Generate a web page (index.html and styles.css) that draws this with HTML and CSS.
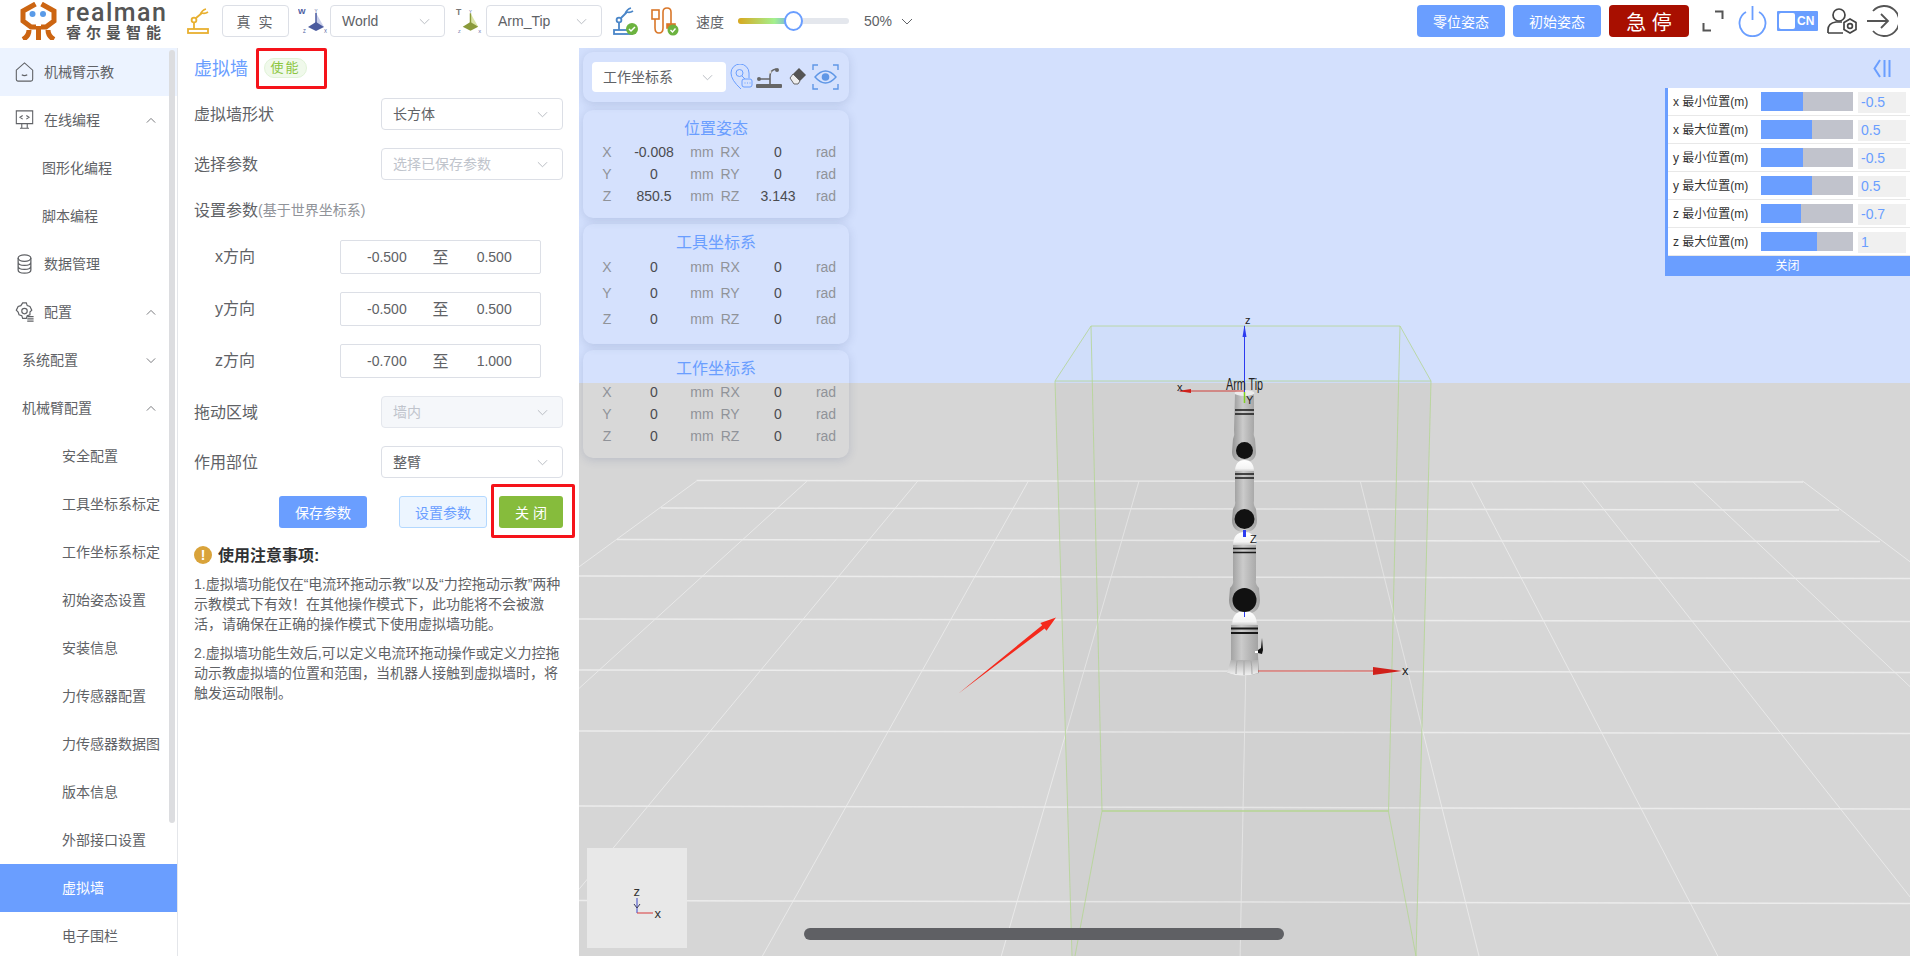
FILE: index.html
```html
<!DOCTYPE html>
<html lang="zh-CN">
<head>
<meta charset="utf-8">
<title>realman 虚拟墙</title>
<link rel="stylesheet" href="styles.css">
</head>
<body>
<div class="app">
  <header class="topbar">
    <div class="logo">
      <svg class="logo-mark" viewBox="0 0 37 38"><g fill="none" stroke="#cc6512" stroke-width="5"><path d="M15.500 2 3 9v10l8 6h5"/><path d="M21.500 2 34 9v10l-8 6h-5"/><path d="M18.500 24v14"/><path d="M9 28q0 6-6 9.500"/><path d="M28 28q0 6 6 9.500"/></g><circle cx="12.500" cy="12" r="3" fill="#5a9be8"/><circle cx="23" cy="12" r="3" fill="#5a9be8"/></svg>
      <div class="logo-text"><div class="logo-en">realman</div><div class="logo-cn">睿尔曼智能</div></div>
    </div>
    <svg class="i-arm" viewBox="0 0 22 26"><g fill="none" stroke="#e8b030" stroke-width="1.800"><rect x="1" y="21" width="20" height="4"/><path d="M7 21v-7"/><circle cx="7" cy="12" r="2.400"/><path d="M9 10l6-5M13 7q2-5 6-6M15 5q3 1 6-1"/></g></svg>
    <div class="btn-mode">真 实</div>
    <svg class="i-axis" viewBox="0 0 30 28"><path d="M18 6l8 14h-8z" fill="#c9cfea"/><path d="M18 6v12" stroke="#4a5a9e" stroke-width="1.500"/><path d="M10 20l8-5 8 5-8 4z" fill="#4a5a9e"/><text class="axis-l axis-w" x="0" y="7">W</text><text class="axis-s" x="16.500" y="6">Y</text><text class="axis-s" x="5" y="26">Z</text><text class="axis-s" x="26" y="26">X</text></svg>
    <div class="select sel-top"><span>World</span><svg class="chev" viewBox="0 0 12 7"><path d="M1 1l5 5 5-5"/></svg></div>
    <svg class="i-axis i-axis-t" viewBox="0 0 30 28"><path d="M16 6l8 14h-8z" fill="#dbe5a8"/><path d="M16 6v12" stroke="#8a9a3a" stroke-width="1.500"/><path d="M8 20l8-5 8 5-8 4z" fill="#8a9a3a"/><text class="axis-l axis-tt" x="1" y="8">T</text><text class="axis-s" x="14.500" y="6">Y</text><text class="axis-s" x="3" y="26">Z</text><text class="axis-s" x="24" y="26">X</text></svg>
    <div class="select sel-top sel-tip"><span>Arm_Tip</span><svg class="chev" viewBox="0 0 12 7"><path d="M1 1l5 5 5-5"/></svg></div>
    <svg class="i-stat" viewBox="0 0 26 30"><g fill="none" stroke="#4a86c8" stroke-width="1.800"><rect x="1" y="24" width="18" height="4"/><path d="M6 24v-8"/><circle cx="6" cy="14" r="2.400"/><path d="M8 12l6-6M12 8q2-5 6-6M14 6q3 1 6-1"/></g><circle cx="19" cy="23" r="6" fill="#6cb33f"/><path d="M16 23l2 2 4-4" fill="none" stroke="#fff" stroke-width="1.500"/></svg>
    <svg class="i-cable" viewBox="0 0 29 30"><g fill="none" stroke="#d9772a" stroke-width="1.600"><rect x="1" y="4" width="7" height="9"/><path d="M4 13v9q0 5 4 5t4-5V6q0-4 4-4t4 4v12"/><rect x="16" y="18" width="8" height="4" fill="#d9772a"/></g><circle cx="22" cy="24" r="5.500" fill="#6cb33f"/><path d="M19.500 24l2 2 3-3.500" fill="none" stroke="#fff" stroke-width="1.400"/></svg>
    <span class="speed-label">速度</span>
    <div class="slider"><div class="slider-fill"></div><div class="slider-knob"></div></div>
    <span class="speed-val">50%</span>
    <svg class="chev chev-speed" viewBox="0 0 12 7"><path d="M1 1l5 5 5-5"/></svg>
    <div class="spacer"></div>
    <div class="btn-blue">零位姿态</div>
    <div class="btn-blue btn-next">初始姿态</div>
    <div class="btn-stop">急 停</div>
    <svg class="i-full" viewBox="0 0 22 22"><path d="M13 1.500h7.500V9M1.500 13v7.500H9" fill="none" stroke="#555" stroke-width="2"/></svg>
    <svg class="i-power" viewBox="0 0 29 32"><path d="M8 7a13 13 0 1 0 13 0M14.500 1v14" fill="none" stroke="#6a9eff" stroke-width="1.800"/></svg>
    <div class="lang"><div class="lang-box"></div><span>CN</span></div>
    <svg class="i-user" viewBox="0 0 30 28"><g fill="none" stroke="#444" stroke-width="1.700"><circle cx="12" cy="8" r="6"/><path d="M1 26v-3q0-7 8-8h6M1 26h15"/><path d="M23 12l6 3.500v7L23 26l-6-3.500v-7z"/><circle cx="23" cy="19" r="2.400"/></g></svg>
    <svg class="i-exit" viewBox="0 0 32 32"><path d="M7 6a15 15 0 1 1 0 20M1 16h21M15 9l7 7-7 7" fill="none" stroke="#555" stroke-width="1.800"/></svg>
  </header>

  <div class="body">
    <nav class="side">
      <div class="nav-bar"></div>
      <div class="nav on-hover"><svg class="nav-ic" viewBox="0 0 20 22"><path d="M1 9l9-8 9 8v10q0 2-2 2H3q-2 0-2-2zM7 14q3 2 6 0" fill="none" stroke="#606266" stroke-width="1.200"/></svg><span>机械臂示教</span></div>
      <div class="nav"><svg class="nav-ic" viewBox="0 0 20 22"><path d="M1 1h18v14H1zM7 15v5M13 15v5M5 20h10M8 6L5 8l3 2M12 6l3 2-3 2" fill="none" stroke="#606266" stroke-width="1.200"/></svg><span>在线编程</span><svg class="chev nav-chev" viewBox="0 0 12 7"><path d="M1 6l5-5 5 5"/></svg></div>
      <div class="nav lv2"><span>图形化编程</span></div>
      <div class="nav lv2"><span>脚本编程</span></div>
      <div class="nav"><svg class="nav-ic" viewBox="0 0 20 22"><g fill="none" stroke="#606266" stroke-width="1.400"><ellipse cx="10" cy="4.500" rx="7" ry="3.500"/><path d="M3 4.500v13q0 3.500 7 3.500t7-3.500v-13M3 9q0 3.500 7 3.500T17 9M3 13.500q0 3.500 7 3.500t7-3.500"/></g></svg><span>数据管理</span></div>
      <div class="nav"><svg class="nav-ic" viewBox="0 0 20 22"><g fill="none" stroke="#606266" stroke-width="1.300"><path d="M8 1h4l1 3 3 1 2 4-2 2 0 3-3 1-1 3H8l-1-3-3-1-1-3-2-2 2-4 3-1z"/><circle cx="10" cy="10" r="3"/><path d="M13 16h7M13 18.500h7M13 21h7"/></g></svg><span>配置</span><svg class="chev nav-chev" viewBox="0 0 12 7"><path d="M1 6l5-5 5 5"/></svg></div>
      <div class="nav lv1"><span>系统配置</span><svg class="chev nav-chev" viewBox="0 0 12 7"><path d="M1 1l5 5 5-5"/></svg></div>
      <div class="nav lv1"><span>机械臂配置</span><svg class="chev nav-chev" viewBox="0 0 12 7"><path d="M1 6l5-5 5 5"/></svg></div>
      <div class="nav lv3"><span>安全配置</span></div>
      <div class="nav lv3"><span>工具坐标系标定</span></div>
      <div class="nav lv3"><span>工作坐标系标定</span></div>
      <div class="nav lv3"><span>初始姿态设置</span></div>
      <div class="nav lv3"><span>安装信息</span></div>
      <div class="nav lv3"><span>力传感器配置</span></div>
      <div class="nav lv3"><span>力传感器数据图</span></div>
      <div class="nav lv3"><span>版本信息</span></div>
      <div class="nav lv3"><span>外部接口设置</span></div>
      <div class="nav lv3 active"><span>虚拟墙</span></div>
      <div class="nav lv3"><span>电子围栏</span></div>
    </nav>

    <section class="panel">
      <div class="p-title"><span class="p-h">虚拟墙</span><span class="tag">使能</span></div>
      <div class="p-row first"><label>虚拟墙形状</label><div class="select sel-p"><span>长方体</span><svg class="chev" viewBox="0 0 12 7"><path d="M1 1l5 5 5-5"/></svg></div></div>
      <div class="p-row"><label>选择参数</label><div class="select sel-p ph"><span>选择已保存参数</span><svg class="chev" viewBox="0 0 12 7"><path d="M1 1l5 5 5-5"/></svg></div></div>
      <div class="p-sub">设置参数<small>(基于世界坐标系)</small></div>
      <div class="r-row r-first"><label>x方向</label><div class="range"><span>-0.500</span><span class="to">至</span><span>0.500</span></div></div>
      <div class="r-row"><label>y方向</label><div class="range"><span>-0.500</span><span class="to">至</span><span>0.500</span></div></div>
      <div class="r-row"><label>z方向</label><div class="range"><span>-0.700</span><span class="to">至</span><span>1.000</span></div></div>
      <div class="p-row"><label>拖动区域</label><div class="select sel-p ph dis"><span>墙内</span><svg class="chev" viewBox="0 0 12 7"><path d="M1 1l5 5 5-5"/></svg></div></div>
      <div class="p-row"><label>作用部位</label><div class="select sel-p"><span>整臂</span><svg class="chev" viewBox="0 0 12 7"><path d="M1 1l5 5 5-5"/></svg></div></div>
      <div class="p-btns"><div class="pb pb-save">保存参数</div><div class="pb pb-set">设置参数</div><div class="pb pb-close">关 闭</div></div>
      <div class="note-h"><span class="note-ic">!</span><b>使用注意事项:</b></div>
      <p class="note n1">1.虚拟墙功能仅在“电流环拖动示教”以及“力控拖动示教”两种示教模式下有效！在其他操作模式下，此功能将不会被激活，请确保在正确的操作模式下使用虚拟墙功能。</p>
      <p class="note n2">2.虚拟墙功能生效后,可以定义电流环拖动操作或定义力控拖动示教虚拟墙的位置和范围，当机器人接触到虚拟墙时，将触发运动限制。</p>
    </section>

    <main class="scene">
      <svg class="canvas" viewBox="579 48 1331 908">
        <defs>
          <linearGradient id="link" x1="0" x2="1" y1="0" y2="0"><stop offset="0" stop-color="#949494"/><stop offset=".45" stop-color="#cbcbcb"/><stop offset="1" stop-color="#a0a0a0"/></linearGradient>
          <linearGradient id="wh" x1="0" x2="0" y1="0" y2="1"><stop offset="0" stop-color="#fff"/><stop offset=".7" stop-color="#f4f4f4"/><stop offset="1" stop-color="#c4c4c4"/></linearGradient>
          <linearGradient id="flare" x1="0" x2="0" y1="0" y2="1"><stop offset="0" stop-color="#b0b0b0"/><stop offset="1" stop-color="#f2f2f2"/></linearGradient>
        </defs>
        <rect x="579" y="383" width="1331" height="573" fill="#d6d6d6"/>
        <g class="grid-v">
          <path d="M696.600 481 45.900 956M807.200 481 284.700 956M917.800 481 523.600 956M1028.400 481 762.400 956M1139 481 1001.300 956M1249.600 481 1240.100 956M1360.200 481 1479 956M1470.800 481 1717.800 956M1581.400 481 1956.700 956M1692 481 2195.500 956M1802.600 481 2434.400 956"/>
        </g>
        <g class="grid-h">
          <path d="M696.600 480.500 1803 482M661 508 1839 510M617 539.500 1880 541.500M579 576 1910 578.500M579 619 1910 621.500M579 670 1910 672.500M579 731 1910 733.500M579 806 1910 809M579 900.500 1910 903.500"/>
        </g>
        <polygon points="1091,326 1400,326 1431,381 1055,381" fill="#c8d8f5" fill-opacity=".25"/>
        <polygon points="1055,381 1431,381 1416,956 1072,956" fill="#9a9a9a" fill-opacity=".07"/>
        <g class="wall">
          <path d="M1091 326H1400L1431 381H1055zM1055 381 1072 956M1431 381 1416 956M1091 326 1102 811 1075 956M1400 326 1388.500 812 1416 956"/>
          <path class="wall-b" d="M1102 811H1388.500"/>
        </g>
        <g class="robot">
          <path d="M1235 394q9.500-4 19 0v36q-1 5 1 9l1 13q0 10-12 10t-12-10l1-13q2-4 1-9z" fill="url(#link)"/>
          <ellipse cx="1244.500" cy="393" rx="10" ry="3" fill="#ececec"/>
          <path d="M1235 410h19M1235 414h19" stroke="#181818" stroke-width="1.500"/>
          <path d="M1235 472q0-12 9.500-12t9.500 12z" fill="url(#wh)"/>
          <path d="M1235 471h19v30q-1 4 2 8l1 11q0 12-12.500 12t-12.500-12l1-11q3-4 2-8z" fill="url(#link)"/>
          <path d="M1235 474h19M1235 478h19" stroke="#181818" stroke-width="1.500"/>
          <circle cx="1244.500" cy="450.500" r="8.500" fill="#111"/>
          <path d="M1233 546q0-14 11.500-14t11.500 14z" fill="url(#wh)"/>
          <path d="M1233 545h23v35q-1 4 3 8l1 12q0 14-15.500 14t-15.500-14l1-12q4-4 3-8z" fill="url(#link)"/>
          <path d="M1233 548.500h23M1233 552.500h23" stroke="#181818" stroke-width="1.500"/>
          <circle cx="1244.500" cy="519" r="10" fill="#111"/>
          <path d="M1232 626q0-15 12.500-15t12.500 15z" fill="url(#wh)"/>
          <path d="M1231 625h27v31l1 17q-15 5-32 0 4-6 4-14z" fill="url(#link)"/>
          <path d="M1227 673q2-8 4-13h27v13q-15 5-31 0z" fill="url(#flare)"/>
          <path d="M1236 674q0-8 1-13M1244 675v-14M1252 674q0-8-1-13" stroke="#a8a8a8" stroke-width="1" fill="none"/>
          <path d="M1231 628.500h27M1231 633h27" stroke="#181818" stroke-width="1.800"/>
          <circle cx="1244.500" cy="600" r="12" fill="#111"/>
          <path d="M1258 650l3-2 1-10 1 12-1 4-4-1z" fill="#111"/>
          <path d="M1258 652h-3" stroke="#fff" stroke-width="2"/>
        </g>
        <g class="axes">
          <path class="ax-blue" d="M1244.500 392V326"/><polygon points="1244.500,325 1242.500,337 1246.500,337" fill="#2b3bf0"/>
          <path class="ax-red" d="M1244 391H1180"/><polygon points="1178,391 1191,389 1191,393" fill="#d0201a"/>
          <path d="M1244.500 392v11" stroke="#7fd020" stroke-width="1.500"/>
          <path d="M1244.500 530v7" stroke="#2b3bf0" stroke-width="3"/>
          <path d="M1244.500 612v5" stroke="#2b3bf0"/>
          <path class="ax-red" d="M1258 671H1375"/><polygon points="1373,667 1402,671 1373,675" fill="#d0201a"/>
          <text class="lbl" x="1245" y="324">z</text>
          <text class="lbl" x="1177" y="391">x</text>
          <text class="lbl" x="1246" y="404">Y</text>
          <text class="lbl" x="1250" y="543">Z</text>
          <text class="lbl lbl-x" x="1402" y="675">x</text>
          <text class="lbl-tip" x="1226" y="390" textLength="37" lengthAdjust="spacingAndGlyphs">Arm Tip</text>
        </g>
        <polygon points="958.500,693.500 1042.200,625.200 1040.300,622.900 1056,617.500 1046.500,630.700 1044.600,628.400" fill="#f4291c"/>
      </svg>

      <div class="float-col">
        <div class="f-card f-tool">
          <div class="select sel-coord"><span>工作坐标系</span><svg class="chev" viewBox="0 0 12 7"><path d="M1 1l5 5 5-5"/></svg></div>
          <svg class="i-loc" viewBox="0 0 23 27"><g fill="none" stroke="#6a9eff" stroke-width="1"><path d="M11 25Q1 16 1 9a9 9 0 0 1 18 0v5"/><circle cx="9.500" cy="9" r="3.500"/><path d="M12 12l3 3"/><rect x="12" y="15" width="10" height="8" rx="2"/></g><path d="M14.500 19h1M17 19h1M19.500 19h1" stroke="#6a9eff"/></svg>
          <svg class="i-rob" viewBox="0 0 26 21"><rect x="0" y="17" width="26" height="4" rx="1" fill="#666"/><g fill="none" stroke="#666" stroke-width="1.600"><path d="M14 17V9q0-6 6-7M3 12h11"/></g><circle cx="3" cy="12" r="2" fill="#666"/><circle cx="21" cy="3" r="2" fill="#666"/><circle cx="14" cy="5" r="1.500" fill="#ddd"/></svg>
          <svg class="i-era" viewBox="0 0 17 18"><path d="M10 0l7 7-6 6-7-7z" fill="#555"/><path d="M4 6l7 7-2 3H5L1 10z" fill="#eee" stroke="#666"/></svg>
          <svg class="i-eye" viewBox="0 0 27 26"><g fill="none" stroke="#5f97e6" stroke-width="1.400"><path d="M1 6V1h5M21 1h5v5M26 20v5h-5M6 25H1v-5M3 13q10.500-12 21 0-10.500 12-21 0z"/></g><circle cx="13.500" cy="13" r="3.800" fill="#5f97e6"/></svg>
        </div>
        <div class="f-card f-data d1">
          <div class="f-title">位置姿态</div>
          <div class="f-grid">
            <span class="l">X</span><span class="v">-0.008</span><span class="u">mm</span><span class="l">RX</span><span class="v">0</span><span class="u">rad</span>
            <span class="l">Y</span><span class="v">0</span><span class="u">mm</span><span class="l">RY</span><span class="v">0</span><span class="u">rad</span>
            <span class="l">Z</span><span class="v">850.5</span><span class="u">mm</span><span class="l">RZ</span><span class="v">3.143</span><span class="u">rad</span>
          </div>
        </div>
        <div class="f-card f-data d2">
          <div class="f-title">工具坐标系</div>
          <div class="f-grid wide">
            <span class="l">X</span><span class="v">0</span><span class="u">mm</span><span class="l">RX</span><span class="v">0</span><span class="u">rad</span>
            <span class="l">Y</span><span class="v">0</span><span class="u">mm</span><span class="l">RY</span><span class="v">0</span><span class="u">rad</span>
            <span class="l">Z</span><span class="v">0</span><span class="u">mm</span><span class="l">RZ</span><span class="v">0</span><span class="u">rad</span>
          </div>
        </div>
        <div class="f-card f-data d3">
          <div class="f-title">工作坐标系</div>
          <div class="f-grid">
            <span class="l">X</span><span class="v">0</span><span class="u">mm</span><span class="l">RX</span><span class="v">0</span><span class="u">rad</span>
            <span class="l">Y</span><span class="v">0</span><span class="u">mm</span><span class="l">RY</span><span class="v">0</span><span class="u">rad</span>
            <span class="l">Z</span><span class="v">0</span><span class="u">mm</span><span class="l">RZ</span><span class="v">0</span><span class="u">rad</span>
          </div>
        </div>
      </div>

      <svg class="collapse" viewBox="0 0 18 19"><path d="M7 1 1.500 9.500 7 18M11.500 1v17M16.500 1v17" fill="none" stroke="#6a9eff" stroke-width="2"/></svg>

      <div class="limits">
        <div class="lim"><span class="lim-n">x 最小位置(m)</span><div class="lim-bar"><div class="lim-fill" style="width:45.500%"></div></div><div class="lim-in">-0.5</div></div>
        <div class="lim"><span class="lim-n">x 最大位置(m)</span><div class="lim-bar"><div class="lim-fill" style="width:55%"></div></div><div class="lim-in">0.5</div></div>
        <div class="lim"><span class="lim-n">y 最小位置(m)</span><div class="lim-bar"><div class="lim-fill" style="width:45.500%"></div></div><div class="lim-in">-0.5</div></div>
        <div class="lim"><span class="lim-n">y 最大位置(m)</span><div class="lim-bar"><div class="lim-fill" style="width:55%"></div></div><div class="lim-in">0.5</div></div>
        <div class="lim"><span class="lim-n">z 最小位置(m)</span><div class="lim-bar"><div class="lim-fill" style="width:43.300%"></div></div><div class="lim-in">-0.7</div></div>
        <div class="lim"><span class="lim-n">z 最大位置(m)</span><div class="lim-bar"><div class="lim-fill" style="width:60.700%"></div></div><div class="lim-in">1</div></div>
        <div class="lim-close">关闭</div>
      </div>

      <div class="gizmo">
        <svg class="gizmo-svg" viewBox="0 0 100 100"><path d="M50 50v15" stroke="#3a46c8"/><path d="M50 65h16" stroke="#d8383a"/><path d="M47 56l3 4 3-4" fill="none" stroke="#3a3a5a"/><text class="gz" x="46.500" y="48">z</text><text class="gz" x="67.500" y="70">x</text></svg>
      </div>
      <div class="h-scroll"></div>
    </main>
  </div>

  <div class="mark m-tag"></div>
  <div class="mark m-close"></div>
</div>
</body>
</html>
```

FILE: styles.css
```css
* { box-sizing: border-box; }
html, body { margin: 0; height: 100%; overflow: hidden; background: #fff; }
body { font-family: "Liberation Sans", "Noto Sans CJK SC", sans-serif; font-size: 14px; color: #606266; }
.app { position: relative; width: 1914px; height: 958px; }

/* top bar */
.topbar { display: flex; align-items: center; height: 48px; padding: 5px 16px 11px 20px; }
.logo { display: flex; align-items: center; width: 145px; height: 38px; flex: none; }
.logo-mark { width: 37px; height: 38px; flex: none; }
.logo-text { margin-left: 9px; width: 100px; }
.logo-en { font-family: Roboto, "Liberation Sans", sans-serif; font-size: 25px; font-weight: 500; line-height: 22px; color: #555; letter-spacing: 1.500px; }
.logo-cn { font-family: "Noto Sans CJK SC", sans-serif; font-size: 15px; line-height: 16px; font-weight: 700; color: #555; letter-spacing: 5px; white-space: nowrap; }
.i-arm { width: 22px; height: 26px; margin-left: 22px; flex: none; }
.btn-mode { width: 67px; height: 32px; margin-left: 13px; border: 1px solid #dcdfe6; border-radius: 4px; display: flex; align-items: center; justify-content: center; flex: none; letter-spacing: 2px; white-space: pre; }
.i-axis { width: 30px; height: 28px; margin-left: 9px; flex: none; }
.i-axis-t { margin-left: 10px; width: 29px; }
.axis-l { font-size: 8px; font-weight: 700; font-family: "Liberation Sans", sans-serif; }
.axis-w { fill: #4a5a9e; }
.axis-tt { fill: #777; font-size: 9px; }
.axis-s { font-size: 4.500px; fill: #4a5a9e; font-family: "Liberation Sans", sans-serif; }
.select { display: flex; align-items: center; justify-content: space-between; height: 32px; background: #fff; border: 1px solid #dcdfe6; border-radius: 4px; padding: 0 14px 0 11px; flex: none; }
.sel-p span, .sel-coord span { padding-bottom: 2px; }
.chev { width: 11px; height: 7px; flex: none; fill: none; stroke: #b4b7bd; stroke-width: 1; }
.sel-top { width: 115px; margin-left: 2px; }
.sel-tip { width: 116px; }
.i-stat { width: 26px; height: 30px; margin-left: 11px; flex: none; }
.i-cable { width: 29px; height: 30px; margin-left: 12px; flex: none; }
.speed-label { width: 28px; margin-left: 16px; flex: none; }
.slider { position: relative; width: 111px; height: 6px; margin-left: 14px; border-radius: 3px; background: #e4e7ed; flex: none; }
.slider-fill { width: 50%; height: 6px; border-radius: 3px 0 0 3px; background: linear-gradient(90deg, #d9a81e, #a3f08e 65%, #6a9eff); }
.slider-knob { position: absolute; left: 46px; top: -7px; width: 19px; height: 20px; border-radius: 50%; border: 2px solid #6a9eff; background: #fff; }
.speed-val { width: 30px; margin-left: 15px; flex: none; }
.chev-speed { margin-left: 7px; width: 12px; stroke: #606266; }
.spacer { flex: 1; }
.btn-blue { width: 88px; height: 32px; background: #6a9eff; color: #fff; border-radius: 4px; display: flex; align-items: center; justify-content: center; flex: none; }
.btn-next { margin-left: 8px; }
.btn-stop { width: 80px; height: 32px; margin-left: 8px; background: #a80f00; color: #fff; border-radius: 4px; display: flex; align-items: center; justify-content: center; font-size: 20px; flex: none; white-space: pre; }
.i-full { width: 22px; height: 22px; margin-left: 13px; flex: none; }
.i-power { width: 29px; height: 32px; margin-left: 14px; flex: none; }
.lang { display: flex; align-items: center; width: 41px; height: 20px; margin-left: 10px; background: #6a9eff; color: #fff; font-size: 12px; font-weight: 700; padding-left: 2px; flex: none; border-radius: 1px; }
.lang-box { width: 16px; height: 16px; background: #fff; border-radius: 2px; margin-right: 2px; }
.i-user { width: 30px; height: 28px; margin-left: 9px; flex: none; }
.i-exit { width: 32px; height: 32px; margin-left: 9px; flex: none; }

/* layout */
.body { display: flex; height: 908px; }

/* sidebar */
.side { position: relative; width: 178px; flex: none; border-right: 1px solid #e4e6ea; overflow: hidden; border-bottom-left-radius: 6px; }
.nav-bar { position: absolute; left: 169px; top: 2px; width: 6px; height: 773px; border-radius: 3px; background: #dcdde0; z-index: 1; }
.nav { position: relative; display: flex; align-items: center; height: 48px; padding-left: 44px; padding-bottom: 2px; }
.nav.on-hover { background: #ecf3ff; }
.nav-ic { position: absolute; left: 15px; top: 14px; width: 19px; height: 20px; }
.nav-chev { position: absolute; left: 146px; top: 21px; stroke: #606266; width: 10px; }
.lv1 { padding-left: 22px; }
.lv2 { padding-left: 42px; }
.lv3 { padding-left: 62px; }
.active { background: #6a9eff; color: #fff; z-index: 2; }

/* panel */
.panel { width: 401px; flex: none; padding-left: 16px; }
.p-title { display: flex; align-items: center; height: 40px; }
.p-h { font-size: 18px; color: #6a9eff; padding-bottom: 2px; }
.tag { display: flex; align-items: center; justify-content: center; width: 43px; height: 20px; margin-left: 16px; padding-bottom: 3px; border: 1px solid #e1f3d8; background: #f0f9eb; border-radius: 10px; color: #8cc63f; font-size: 13px; letter-spacing: 2px; }
.p-row { display: flex; align-items: center; justify-content: space-between; width: 369px; height: 32px; margin-top: 18px; }
.p-row.first { margin-top: 10px; }
.p-row label, .r-row label, .p-sub { font-size: 16px; color: #606266; }
.p-row label { padding-bottom: 3px; }
.r-row label { padding-bottom: 5px; }
.sel-p { width: 182px; }
.ph { color: #c0c4cc; }
.dis { background: #f5f7fa; border-color: #e4e7ed; }
.p-sub { height: 28px; margin-top: 16px; padding-bottom: 3px; display: flex; align-items: center; }
.p-sub small { font-size: 14px; color: #909399; }
.r-row { display: flex; align-items: center; height: 34px; margin-top: 18px; }
.r-first { margin-top: 16px; }
.r-row label { width: 146px; padding-left: 21px; }
.range { display: grid; grid-template-columns: 1fr 1fr 1fr; width: 201px; height: 34px; border: 1px solid #dcdfe6; border-radius: 2px; align-items: center; text-align: center; padding: 0 19px; }
.to { font-size: 16px; padding-bottom: 3px; }
.p-btns { display: flex; justify-content: flex-end; width: 369px; margin-top: 18px; }
.pb { display: flex; align-items: center; justify-content: center; height: 32px; width: 88px; border-radius: 3px; }
.pb-save { background: #6a9eff; color: #fff; }
.pb-set { margin-left: 32px; background: #ecf5ff; border: 1px solid #b3d8ff; color: #6a9eff; }
.pb-close { margin-left: 12px; width: 64px; background: #86bc3c; color: #fff; white-space: pre; }
.note-h { display: flex; align-items: center; height: 22px; margin-top: 16px; font-size: 16px; color: #303133; }
.note-h b { padding-bottom: 3px; }
.note-ic { width: 18px; height: 18px; margin-right: 6px; border-radius: 50%; background: #d9a33a; color: #fff; font-size: 14px; font-weight: 700; display: flex; align-items: center; justify-content: center; }
.note { width: 369px; margin: 0; font-size: 14px; line-height: 20px; color: #606266; }
.n1 { margin-top: 8px; }
.n2 { margin-top: 9px; }

/* 3D scene */
.scene { position: relative; width: 1331px; height: 908px; background: #d3e0fd; overflow: hidden; flex: none; }
.canvas { position: absolute; left: 0; top: 0; width: 1331px; height: 908px; }
.grid-v path { stroke: #e9e9e9; stroke-width: 1; fill: none; }
.grid-h path { stroke: #ececec; stroke-width: 1.500; fill: none; }
.wall path { fill: none; stroke: #b4d592; stroke-width: .8; }
.wall .wall-b { stroke-width: 1.500; }
.ax-blue { stroke: #2b3bf0; stroke-width: 1; }
.ax-red { stroke: #d0403a; stroke-width: 1; }
.lbl { font-size: 11px; fill: #222; font-family: "Liberation Sans", sans-serif; }
.lbl-x { font-size: 13px; }
.lbl-tip { font-size: 16px; fill: #222; font-family: "Liberation Sans", sans-serif; }

.float-col { position: absolute; left: 4px; top: 4px; width: 266px; }
.f-card { border-radius: 10px; background: rgba(255, 255, 255, .06); box-shadow: 0 2px 10px rgba(60, 80, 130, .18); }
.f-tool { display: flex; align-items: center; height: 50px; padding-left: 9px; }
.sel-coord { width: 134px; height: 30px; border: 0; padding: 0 13px 0 11px; color: #606266; }
.i-loc { width: 23px; height: 27px; margin-left: 4px; flex: none; }
.i-rob { width: 26px; height: 21px; margin-left: 3px; flex: none; }
.i-era { width: 17px; height: 18px; margin-left: 7px; flex: none; }
.i-eye { width: 27px; height: 26px; margin-left: 6px; flex: none; }
.f-data { padding-top: 7px; }
.d1 { height: 108px; margin-top: 8px; }
.d2 { height: 120px; margin-top: 6px; }
.d3 { height: 108px; margin-top: 6px; }
.f-title { text-align: center; font-size: 16px; line-height: 24px; color: #6a9eff; }
.f-grid { display: grid; grid-template-columns: 28px 66px 30px 26px 70px 26px; grid-auto-rows: 22px; align-items: center; justify-items: center; padding-left: 10px; }
.f-grid.wide { grid-auto-rows: 26px; margin-top: -1px; }
.l, .u { color: #909399; }
.v { color: #4a4b50; }

.collapse { position: absolute; left: 1294px; top: 11px; width: 18px; height: 19px; }
.limits { position: absolute; left: 1086px; top: 40px; width: 245px; background: #fff; border-left: 3px solid #6a9eff; }
.lim { display: flex; align-items: center; height: 28px; border-bottom: 1px solid #e8e8e8; padding-left: 5px; }
.lim-n { width: 88px; padding-bottom: 3px; font-size: 12px; color: #333; white-space: nowrap; flex: none; }
.lim-bar { width: 92px; height: 19px; background: #c1c3cc; flex: none; }
.lim-fill { height: 19px; background: #6a9eff; }
.lim-in { width: 48px; height: 21px; margin-left: 5px; margin-top: 2px; padding-left: 3px; background: #f0f0f0; color: #6a9eff; font-size: 14px; line-height: 21px; flex: none; }
.lim-close { height: 20px; margin-left: -3px; background: #6a9eff; color: #fff; font-size: 12px; line-height: 20px; text-align: center; }
.gizmo { position: absolute; left: 8px; top: 800px; width: 100px; height: 100px; background: #e8e8e8; }
.gizmo-svg { display: block; width: 100px; height: 100px; }
.gz { font-size: 13px; fill: #333; font-family: "Liberation Sans", sans-serif; }
.h-scroll { position: absolute; left: 225px; top: 880px; width: 480px; height: 12px; border-radius: 6px; background: #5f6064; }

/* red annotation frames */
.mark { position: absolute; border: 3px solid #f5131a; border-radius: 2px; }
.m-tag { left: 256px; top: 48px; width: 71px; height: 41px; }
.m-close { left: 491px; top: 484px; width: 84px; height: 54px; }
```
